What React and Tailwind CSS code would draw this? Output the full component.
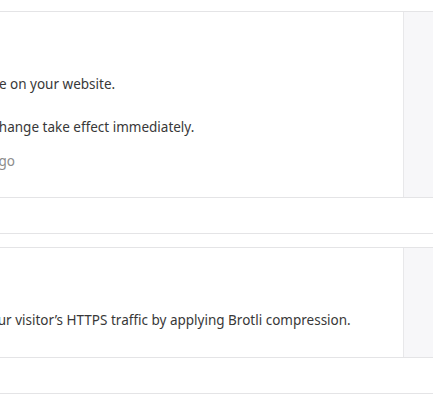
const Card = ({ title, children, bodyClass }) => (
  <div className="border-y border-[#e4e4e6] bg-white">
    <div className={`flex ${bodyClass}`}>
      <div className="flex-1 overflow-hidden">
        <div className="pr-4 pt-[20px]">
          <h3 className="-ml-[240px] text-[15px] font-semibold text-[#333]">{title}</h3>
          {children}
        </div>
      </div>
      <div className="w-[30px] shrink-0 border-l border-[#e8e8ea] bg-[#f7f7f9]" />
    </div>
    <div className="h-[36px] border-t border-[#e4e4e6]" />
  </div>
);

export default function App() {
  return (
    <div
      className="min-h-[400px] bg-white pt-[11px] text-[13.5px] text-[#383838]"
      style={{ fontFamily: '"Noto Sans", "Open Sans", sans-serif' }}
    >
      <Card title="Auto Minify" bodyClass="h-[185px]">
        <p className="-ml-[211px] mt-[19px] whitespace-nowrap leading-5">
          Reduce the file size of source code on your website.
        </p>
        <p className="-ml-[210px] mt-[23px] whitespace-nowrap leading-5">
          Note: Purge cache to have your change take effect immediately.
        </p>
        <p className="-ml-[262px] mt-[14px] whitespace-nowrap leading-5 text-[#8c8c8c]">
          This setting was last changed 2 months ago
        </p>
      </Card>
      <div className="h-[13px]" />
      <Card title="Brotli" bodyClass="h-[109px]">
        <p className="-ml-[207px] mt-[19px] whitespace-nowrap leading-5">
          Speed up page load times for your visitor’s HTTPS traffic by applying Brotli compression.
        </p>
      </Card>
    </div>
  );
}
